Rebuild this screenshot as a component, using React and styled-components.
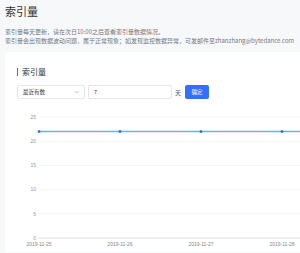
import React from 'react';
import styled, { createGlobalStyle } from 'styled-components';

const GlobalStyle = createGlobalStyle`
  html, body {
    margin: 0;
    padding: 0;
    background: #f7f8fa;
    font-family: "Noto Sans CJK SC", "Noto Sans", sans-serif;
  }
`;

const Page = styled.div`
  width: 300px;
  height: 253px;
  overflow: hidden;
  padding: 4px 0 0 5px;
  box-sizing: border-box;
`;

const Title = styled.h1`
  margin: 0;
  font-size: 11px;
  line-height: 15px;
  font-weight: 400;
  color: #333;
`;

const Desc = styled.p`
  margin: 8px 0 0;
  font-size: 6px;
  line-height: 9px;
  color: #777;
  white-space: nowrap;
`;

const Card = styled.div`
  margin-top: 7px;
  background: #fff;
  width: 320px;
  padding: 14px 0 0 12px;
  box-sizing: border-box;
  height: 200px;
`;

const Heading = styled.h2`
  margin: 0;
  display: flex;
  align-items: center;
  gap: 4px;
  font-size: 8px;
  line-height: 12px;
  font-weight: 400;
  color: #333;
  &:before {
    content: '';
    width: 1px;
    height: 8px;
    background: #3370ff;
  }
`;

const Controls = styled.div`
  display: flex;
  align-items: center;
  margin-top: 7px;
  gap: 3px;
`;

const Field = styled.div`
  display: flex;
  align-items: center;
  justify-content: space-between;
  width: ${p => p.width}px;
  height: 14px;
  box-sizing: border-box;
  border: 1px solid #e4e6ea;
  border-radius: 2px;
  padding: 0 5px;
  font-size: 5.5px;
  color: #333;
`;

const Unit = styled.span`
  font-size: 6px;
  color: #555;
  margin-right: 1px;
`;

const Button = styled.button`
  height: 14px;
  width: 24px;
  padding: 0;
  border: none;
  border-radius: 2px;
  background: #3370ff;
  color: #fff;
  font-family: inherit;
  font-size: 5.5px;
`;

const Chart = styled.svg`
  display: block;
  margin-top: 10px;
  font-family: "Liberation Sans", sans-serif;
`;

const ticks = [25, 20, 15, 10, 5, 0];
const dates = ['2019-11-25', '2019-11-26', '2019-11-27', '2019-11-28'];
const yOf = v => 129 - v * 4.84;
const xOf = i => 22 + i * 81;

export default function App() {
  const lineY = yOf(22);
  return (
    <Page>
      <GlobalStyle />
      <Title>索引量</Title>
      <Desc>
        索引量每天更新，请在次日10:00之后查看索引量数据情况。<br />
        索引量会出现数据波动问题，属于正常现象；如发现监控数据异常，可发邮件至zhanzhang@bytedance.com
      </Desc>
      <Card>
        <Heading>索引量</Heading>
        <Controls>
          <Field width={68}>
            最近有数
            <svg width="5" height="4" viewBox="0 0 5 4">
              <path d="M0.5 1 L2.5 3 L4.5 1" fill="none" stroke="#aaa" strokeWidth="0.7" />
            </svg>
          </Field>
          <Field width={84}>7</Field>
          <Unit>天</Unit>
          <Button>确定</Button>
        </Controls>
        <Chart width="300" height="145">
          {ticks.map(t => (
            <g key={t}>
              <line
                x1="22"
                x2="300"
                y1={yOf(t)}
                y2={yOf(t)}
                stroke={t === 0 ? '#d6d8dc' : '#f0f1f3'}
                strokeWidth="0.8"
              />
              <text x="19" y={yOf(t) + 1.8} fontSize="5" fill="#999" textAnchor="end">{t}</text>
            </g>
          ))}
          <line x1="22" x2="300" y1={lineY} y2={lineY} stroke="#6cb0ea" strokeWidth="1.6" />
          {dates.map((d, i) => (
            <g key={d}>
              <rect x={xOf(i) - 1.2} y={lineY - 1.2} width="2.4" height="2.4" fill="#2f6db5" />
              <text x={xOf(i)} y="137" fontSize="5" fill="#888" textAnchor="middle">{d}</text>
            </g>
          ))}
        </Chart>
      </Card>
    </Page>
  );
}
